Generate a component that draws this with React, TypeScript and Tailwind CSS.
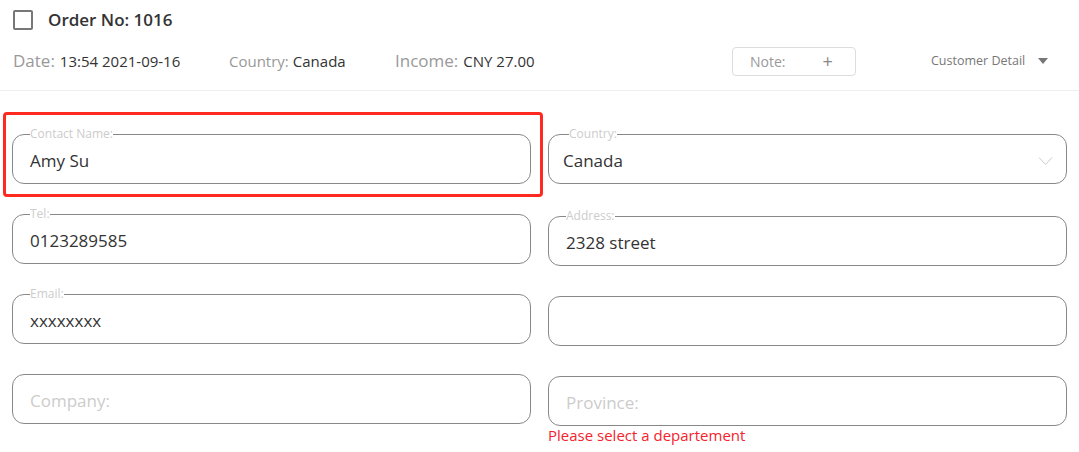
import React from 'react'

type FieldProps = {
  label?: string
  value?: string
  placeholder?: string
  select?: boolean
  className?: string
}

const Field: React.FC<FieldProps> = ({ label, value, placeholder, select, className }) => {
  return (
    <fieldset
      className={`m-0 h-[57px] min-w-0 rounded-[12px] border border-[#888] px-[17px] pb-0 pt-0 ${className ?? ''}`}
    >
      <legend className={`h-[14px] p-0 text-[12px] leading-[14px] text-[#ccc] ${select ? 'ml-[3px]' : ''}`}>
        {label}
      </legend>
      <div className={`-mt-[1px] flex h-[42px] items-center justify-between ${select ? '-ml-[3px]' : ''}`}>
        {value ? (
          <span className="text-[17px] text-[#333]">{value}</span>
        ) : (
          <span className="text-[17px] text-[#ccc]">{placeholder}</span>
        )}
        {select && (
          <svg width="15" height="10" viewBox="0 0 15 10" className="mr-[-4px]">
            <path d="M1 1.5 L7.5 8.5 L14 1.5" fill="none" stroke="#ccc" strokeWidth="1" />
          </svg>
        )}
      </div>
    </fieldset>
  )
}

export default function App() {
  return (
    <div className="relative w-[1079px] h-[452px] bg-white font-['Open_Sans',sans-serif] text-[#333]">
      {/* Header */}
      <div className="border-b border-[#eee] pb-[8px]">
        <div className="flex h-[40px] items-center pl-[13px]">
          <div className="h-[20px] w-[20px] rounded-[2px] border-2 border-[#777]" />
          <span className="ml-[15px] text-[17px] font-semibold text-[#333]">Order No: 1016</span>
        </div>
        <div className="flex h-[42px] items-center pl-[13px]">
          <div className="flex w-[216px] items-baseline">
            <span className="text-[17px] text-[#999]">Date:</span>
            <span className="ml-[5px] text-[15px] text-[#333]">13:54 2021-09-16</span>
          </div>
          <div className="flex w-[166px] items-baseline">
            <span className="text-[15px] text-[#999]">Country:</span>
            <span className="ml-[4px] text-[15px] text-[#333]">Canada</span>
          </div>
          <div className="flex w-[337px] items-baseline">
            <span className="text-[17px] text-[#999]">Income:</span>
            <span className="ml-[5px] text-[15px] text-[#333]">CNY 27.00</span>
          </div>
          <div className="flex h-[29px] w-[124px] items-center rounded-[4px] border border-[#ddd] pl-[17px]">
            <span className="text-[14px] text-[#999]">Note:</span>
            <span className="ml-[37px] text-[18px] leading-none text-[#888]">+</span>
          </div>
          <div className="ml-[75px] flex items-center">
            <span className="text-[12.5px] text-[#777]">Customer Detail</span>
            <svg width="10" height="6" viewBox="0 0 10 6" className="ml-[13px]">
              <path d="M0 0 L10 0 L5 6 Z" fill="#777" />
            </svg>
          </div>
        </div>
      </div>

      {/* Form */}
      <div className="grid grid-cols-2 gap-x-[17px] px-3 pt-[36px]">
        <div className="flex flex-col gap-[23px]">
          <Field label="Contact Name:" value="Amy Su" />
          <Field label="Tel:" value="0123289585" />
          <Field label="Email:" value="xxxxxxxx" />
          <Field placeholder="Company:" />
        </div>
        <div className="flex flex-col gap-[23px]">
          <Field label="Country:" value="Canada" select />
          <Field label="Address:" value="2328 street" className="mt-[2px]" />
          <Field />
          <div>
            <Field placeholder="Province:" />
            <p className="mt-[0px] text-[15px] leading-[18px] text-[#f5222d]">Please select a departement</p>
          </div>
        </div>
      </div>

      {/* Highlight annotation */}
      <div className="pointer-events-none absolute left-[3px] top-[112px] h-[85px] w-[540px] rounded-[4px] border-[3px] border-[#ff2a1f]" />
    </div>
  )
}
